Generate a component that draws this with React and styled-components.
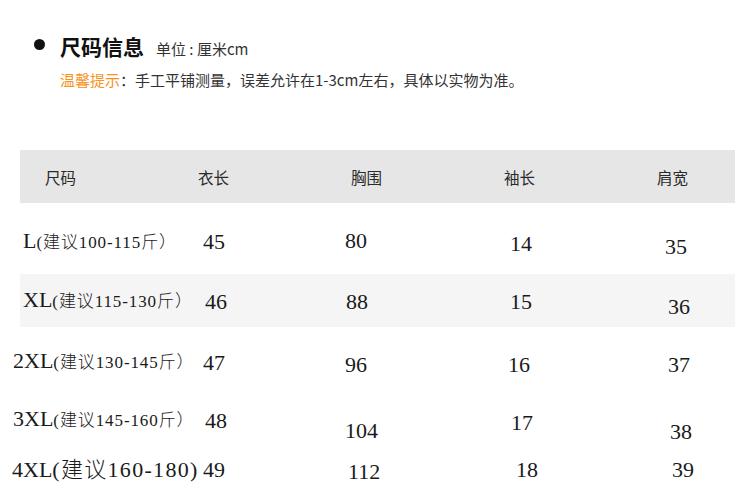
import React from "react";
import styled, { createGlobalStyle } from "styled-components";

const Global = createGlobalStyle`
  html, body { margin: 0; padding: 0; background: #ffffff; }
  body { font-family: "Noto Sans CJK SC", "Noto Sans", sans-serif; color: #222; }
`;

const Page = styled.div`
  width: 750px;
  height: 500px;
  overflow: hidden;
  box-sizing: border-box;
  padding-top: 34px;
`;

const Intro = styled.section`
  display: flex;
  flex-direction: column;
  gap: 11px;
  padding-left: 34px;
`;

const TitleLine = styled.div`
  display: flex;
  align-items: baseline;
  gap: 12px;
`;

const Bullet = styled.span`
  width: 11px;
  height: 11px;
  border-radius: 50%;
  background: #111;
  align-self: center;
  margin-right: 3px;
  position: relative;
  top: -2px;
`;

const Title = styled.h2`
  margin: 0;
  font-size: 21px;
  line-height: 25px;
  font-weight: 700;
  color: #111;
`;

const Unit = styled.span`
  font-size: 15px;
  line-height: 20px;
  color: #333;
`;

const Tip = styled.p`
  margin: 0 0 0 26px;
  font-size: 15px;
  line-height: 20px;
  color: #333;
  white-space: nowrap;
`;

const TipLabel = styled.span`
  color: #f7931e;
`;

const Table = styled.div`
  margin: 60px 15px 0 20px;
  display: flex;
  flex-direction: column;
`;

const HeadRow = styled.div`
  display: grid;
  grid-template-columns: 153px 153px 153px 153px 1fr;
  height: 53px;
  align-items: center;
  background: #e6e6e6;
`;

const HeadCell = styled.div`
  padding-left: 25px;
  font-size: 15.5px;
  color: #2a2a2a;
`;

const DataRow = styled.div`
  display: grid;
  grid-template-columns: 183px 142px 163px 157px 1fr;
  align-items: center;
  box-sizing: border-box;
  height: ${(p) => p.$h}px;
  padding-top: ${(p) => p.$pt || 0}px;
  background: ${(p) => (p.$band ? "#f5f5f5" : "transparent")};
`;

const Cell = styled.div`
  font-family: "Liberation Serif", "Noto Sans CJK SC", serif;
  font-size: 22px;
  line-height: 22px;
  color: #1a1a1a;
  white-space: nowrap;
  transform: translate(${(p) => p.$dx || 0}px, ${(p) => p.$dy || 0}px);
`;

const Note = styled.span`
  font-size: ${(p) => (p.$large ? 22 : 17)}px;
  letter-spacing: ${(p) => (p.$large ? 1.3 : 0.9)}px;
  font-weight: 300;
`;

const headers = ["尺码", "衣长", "胸围", "袖长", "肩宽"];

const rows = [
  {
    size: "L",
    note: "(建议100-115斤）",
    vals: ["45", "80", "14", "35"],
    h: 71,
    pt: 7,
    n: [[3, 0], [0, 0], [0, -1.5], [2, 2], [0, 5]],
  },
  {
    size: "XL",
    note: "(建议115-130斤）",
    vals: ["46", "88", "15", "36"],
    h: 53,
    band: true,
    n: [[3, 0], [2, 0.5], [1, 0.5], [2, 0.5], [3, 6]],
  },
  {
    size: "2XL",
    note: "(建议130-145斤）",
    vals: ["47", "96", "16", "37"],
    h: 74,
    n: [[-7, -2.5], [0, -1], [0, 1], [0, 1], [3, 1]],
  },
  {
    size: "3XL",
    note: "(建议145-160斤）",
    vals: ["48", "104", "17", "38"],
    h: 42,
    n: [[-7, -2], [2, -1], [0, 9], [3, 1], [5, 10]],
  },
  {
    size: "4XL",
    note: "(建议160-180)",
    large: true,
    vals: ["49", "112", "18", "39"],
    h: 54,
    n: [[-8, 0], [0, 0], [3, 1.5], [8, 0], [7, 0]],
  },
];

export default function App() {
  return (
    <>
      <Global />
      <Page>
        <Intro>
          <TitleLine>
            <Bullet />
            <Title>尺码信息</Title>
            <Unit>单位 : 厘米cm</Unit>
          </TitleLine>
          <Tip>
            <TipLabel>温馨提示</TipLabel>：手工平铺测量，误差允许在1-3cm左右，具体以实物为准。
          </Tip>
        </Intro>
        <Table>
          <HeadRow>
            {headers.map((h) => (
              <HeadCell key={h}>{h}</HeadCell>
            ))}
          </HeadRow>
          {rows.map((r) => (
            <DataRow key={r.size} $h={r.h} $pt={r.pt} $band={r.band}>
              <Cell $dx={r.n[0][0]} $dy={r.n[0][1]}>
                {r.size}
                <Note $large={r.large}>{r.note}</Note>
              </Cell>
              {r.vals.map((v, i) => (
                <Cell key={i} $dx={r.n[i + 1][0]} $dy={r.n[i + 1][1]}>
                  {v}
                </Cell>
              ))}
            </DataRow>
          ))}
        </Table>
      </Page>
    </>
  );
}
